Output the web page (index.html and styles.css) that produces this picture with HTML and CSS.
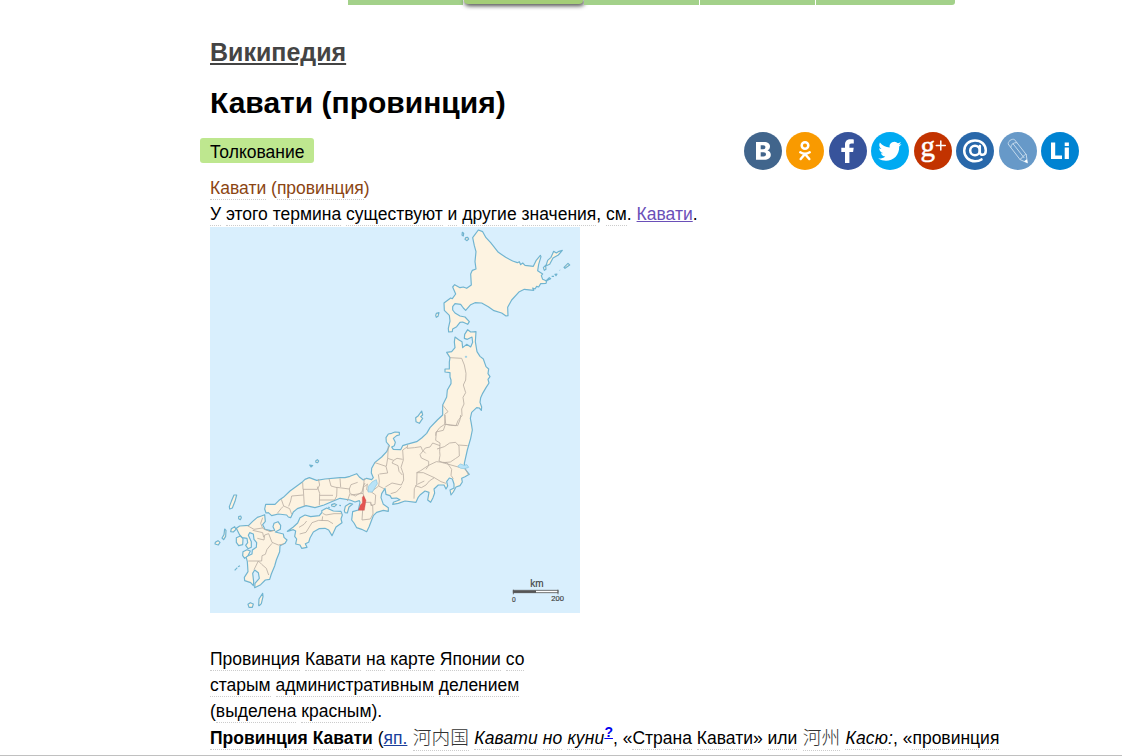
FILE: index.html
```html
<!DOCTYPE html>
<html lang="ru">

<head>
    <meta charset="UTF-8">
    <meta name="viewport" content="width=device-width, initial-scale=1.0">
    <title>Кавати (провинция)</title>
    <link rel="stylesheet" href="styles.css">
</head>

<body>
    <nav class="tabs">
        <a class="tab"></a>
        <a class="tab active"></a>
        <a class="tab"></a>
        <a class="tab"></a>
        <a class="tab last"></a>
    </nav>

    <main class="content">
        <h3 class="dict"><a href="#">Википедия</a></h3>
        <h1 class="title">Кавати (провинция)</h1>

        <div class="toolbar">
            <span class="label">Толкование</span>
            <div class="share">
                <svg class="vk" viewBox="0 0 38 38"><circle cx="19" cy="19" r="19"/><path class="glyph" fill-rule="evenodd" d="M12 10h8c4 0 6 2 6 4.500 0 2-1 3.300-2.500 4 2 .600 3.300 2 3.300 4.200 0 3.500-2.800 5-6.500 5H12zm4.700 3.300v3.900h2.500c1.500 0 2.200-.8 2.200-2s-.7-1.900-2.200-1.900zm0 6.900v4.200h2.800c1.700 0 2.500-.8 2.500-2.100s-.8-2.100-2.500-2.100z"/></svg>
                <svg class="ok" viewBox="0 0 38 38"><circle cx="19" cy="19" r="19"/><circle class="line" cx="19" cy="13.500" r="3.300"/><path class="line" d="M14.300 20.300c3 1.900 6.400 1.900 9.400 0M19 22l-4.300 5M19 22l4.300 5"/></svg>
                <svg class="fb" viewBox="0 0 38 38"><circle cx="19" cy="19" r="19"/><path class="glyph" d="M16 31V20h-3.700v-4.300H16v-3C16 9 18.200 7.200 21.500 7.200c1.500 0 2.900.1 3.300.2v4h-2.300c-1.800 0-2.100.9-2.100 2.100v2.200h4.300l-.6 4.300h-3.700v11z"/></svg>
                <svg class="tw" viewBox="0 0 38 38"><circle cx="19" cy="19" r="19"/><path class="glyph" d="M30.500 12c-.9.400-1.800.6-2.700.7 1-.6 1.700-1.500 2.100-2.600-.9.600-2 1-3 1.200a4.800 4.800 0 0 0-8.200 4.300c-4-.2-7.500-2.100-9.800-5-1.200 2.100-.7 4.900 1.500 6.300-.8 0-1.500-.2-2.200-.6 0 2.300 1.600 4.300 3.800 4.800-.7.200-1.400.2-2.100.1.600 1.900 2.300 3.200 4.400 3.300-2 1.600-4.500 2.300-7.100 2 10 6 21.500-.6 21-12.100 1-.700 1.700-1.500 2.300-2.400z"/></svg>
                <svg class="gp" viewBox="0 0 38 38"><circle cx="19" cy="19" r="19"/><text class="glyph" x="6.500" y="23.500">g</text><path class="line" d="M26.800 9v9M22.300 13.500h9"/></svg>
                <svg class="ml" viewBox="0 0 38 38"><circle cx="19" cy="19" r="19"/><circle class="line" cx="19" cy="18.500" r="4.800"/><path class="line" d="M23.800 14v6c0 4 6 4 6-1.500 0-6-4.600-10-10.800-10s-10.800 4.400-10.800 10.300S13 29.300 19 29.300c2.400 0 4.700-.6 6.500-1.900"/></svg>
                <svg class="lj" viewBox="0 0 38 38"><circle cx="19" cy="19" r="19"/><path class="line" d="M9.500 12.500L21 27.500l7.500 3.500-1.300-8.500L15.600 7.700c-2.300-1.800-8.200 2.300-6.100 4.800zM11.700 15.300c.5-3.300 2.900-4.800 6-4.700M14 11.700l11 14M21 27.500c.3-1.500 1.500-1.200 2-1.300.3-1.700 1-2 2-2 .3-1.500 1-1.900 2.200-1.700"/><path class="glyph" d="M25 29.300l3.500 1.700-.6-3.800z"/></svg>
                <svg class="li" viewBox="0 0 38 38"><circle cx="19" cy="19" r="19"/><path class="glyph" d="M10 10.500h4.200v13H21V27H10zM23.700 15.500h4.200V27h-4.200zM23.700 10.500h4.200V14h-4.200z"/></svg>
            </div>
        </div>

        <article class="article">
            <p class="name"><span>Кавати</span> (<span>провинция</span>)</p>
            <p><span>У</span> <span>этого</span> <span>термина</span> <span>существуют</span> <span>и</span> <span>другие</span> <span>значения</span>, <span>см</span>. <a class="visited" href="#">Кавати</a>.</p>

            <svg class="map" viewBox="0 0 1110 1158">
                <!-- Хоккайдо -->
                <g class="land" transform="translate(630 -6)">
                    <path d="M175 15L188 20 198 38 212 53 235 82 257 97 278 108 292 113 298 110 302 119 308 114 315 121 340 124 348 107 361 91 363 95 356 118 353 137 368 147 364 152 368 163 380 168 378 175 362 176 356 186 350 184 345 192 338 189 341 196 313 193 298 200 275 225 263 247 264 272 258 273 245 264 222 257 205 245 185 234 165 233 152 239 137 256 130 249 122 238 105 236 98 245 98 255 105 264 120 273 135 276 148 290 143 298 128 291 120 292 110 305 98 312 97 320 86 321 85 310 90 288 88 271 73 256 72 234 92 219 97 221 107 207 98 186 104 179 120 188 130 186 140 190 154 180 152 147 157 136 168 132 165 110 168 80 163 62 158 38z"/>
                    <path d="M127 22l4 3-1 8-4-3zM137 38l6-1 3 5-5 5-6-4zM49 265l8-2-3 11-5 3-2-6zM370 128l3 8 5-3-1-10 12-5 10-19 16-9 12-14-10 3-8 5-8-5-8 18-10 9-4 13zM432 127l12-12 5 5-14 10zM378 168l10-10 4 3zM395 154l7 0M405 148l6-1-3 5zM419 135l1 1"/>
                </g>
                <!-- Хонсю -->
                <path class="land" d="M735 330L746 338 756 344 758 362 770 352 782 360 788 346 786 330 772 337 763 334 764 322 773 308 782 315 798 314 796 344 801 374 810 388 820 396 828 419 836 426 834 440 840 449 834 457 837 468 828 482 818 499 812 512 810 526 815 540 814 550 808 543 800 542 785 556 781 574 784 590 787 609 782 634 772 669 763 709 765 726 778 742 765 749 755 754 757 765 750 776 738 780 730 795 723 804 720 789 732 783 732 771 727 756 718 753 710 764 713 777 708 786 702 774 685 774 672 786 674 798 669 812 662 826 653 819 657 796 645 792 630 804 624 812 618 826 585 822 565 829 548 832 550 826 570 818 560 813 545 814 540 806 528 802 525 784 515 800 513 812 520 832 535 842 535 853 520 850 500 856 490 866 485 879 477 900 470 914 455 907 440 902 432 888 425 879 428 854 445 849 450 826 448 821 435 825 420 819 390 814 370 822 342 834 315 842 288 836 262 845 250 855 242 872 235 870 230 864 205 861 185 866 175 857 168 858 164 846 167 832 195 832 207 820 220 811 240 792 278 764 285 757 298 752 320 760 345 756 390 752 405 752 420 748 440 740 448 750 460 759 470 754 485 758 490 752 484 738 485 724 495 706 515 690 530 674 538 656 529 645 528 632 535 621 545 619 555 615 568 616 568 624 560 626 550 634 556 646 553 656 545 660 550 667 572 668 578 656 590 652 620 644 635 633 650 619 660 602 682 579 698 564 698 534 710 510 712 489 723 470 723 459 720 450 720 437 705 435 705 426 718 426 718 405 720 392 710 376 725 374 735 362 733 345z"/>
                <!-- Сикоку -->
                <g class="land" transform="translate(120 714)">
                    <path d="M112 199L130 186 143 174 150 158 165 150 182 155 208 152 216 142 215 137 230 129 250 138 273 139 277 150 273 162 276 173 258 186 246 212 236 195 225 190 207 191 190 201 180 219 176 232 166 236 171 247 155 250 150 240 137 237 140 222 134 214 137 198 130 194z"/>
                    <path d="M283 137l3-13 14-9 8 2-11 9-5 18-7-1zM245 119l9-3 6 3-7 6-8-2zM179 0l4 6 5-4zM197 -12l5-4 4 4-3 5-5-1zM268 121l5 1M235 126l4 3"/>
                </g>
                <!-- Кюсю -->
                <g class="land" transform="translate(-6 789)">
                    <path d="M170 74L172 94 164 104 171 118 188 122 200 121 195 110 198 100 210 95 218 106 217 118 202 126 226 132 228 142 237 150 231 160 216 167 215 185 205 210 200 228 190 252 185 268 172 270 158 284 140 293 141 280 154 265 151 248 140 240 134 250 137 275 136 287 128 278 110 272 109 262 120 245 118 215 114 200 132 192 133 180 145 172 146 158 138 148 136 132 125 128 121 136 130 155 130 172 120 176 113 166 119 158 117 145 103 143 95 135 85 115 95 108 122 106 134 94 148 82 160 78z"/>
                    <path d="M85 143l12-5 8 8-1 18-12 3-7-10zM105 185l12-6 10 4-7 14-10 8-6-8zM70 116l10-6 4 8-8 8-8-1zM92 80l6-2 2 5-3 6-5-3zM64 50l6-16 8-19 8 0-5 19-8 20-8 3zM48 134l2-17 4 4-1 18-6 10-5-5zM22 157l8-5 6 5-5 8-10-3zM120 343l7-5 9 4-3 10-10 0zM152 347l1-20 11-17 1 10-5 21-5 5zM80 241l8-8M90 230l6-3"/>
                </g>
                <!-- Садо -->
                <path class="land" d="M635 552L638 564 632 569 638 574 628 589 618 584 617 572 625 566z"/>

                <!-- границы провинций -->
                <g class="border">
                    <g transform="translate(570 294)">
                        <path d="M150 98l35 2 8 20 5 25-1 20-7 15 7 23-8 14 3 20-7 15 1 20-12 15-6 15-16-1-13-3M128 240l16 20-10 8 3 28-7 20-22 5-1 11"/>
                    </g>
                    <g transform="translate(420 564)">
                        <path d="M285 0l-1 28 39 4 7-18 2-14M284 28l-15 10-10 13-2 25 13 8-1 25 1 12-3 17 11 5 23-2 15-10 12-8-1-30-10-11-18 2-16 11-22 7M325 90l28 2M270 92l-22-8-8 12-14 3-16 20 4 10 22 10 0 12-8 12M234 152l-22 15-12 6M234 152l25-12 32 3 14 20-2 18 7 10M278 143l50 14M343 155l12 24M173 90l-2 10 22-2 20-3 4 10 10 10M173 95l-15 10 2 30-7 22 7 20 1 18-7 15-28-6-20 12M158 133l-17-3-10 6-18-6M115 92l-2 38-4 24M131 136l-5 8 18 8 3 17 10 11M75 143l33 11 5 20-25 3M85 178l3 20-2 15-23 18-13-7 2-17M43 190l-2 20-2 25-37 5M53 207l-10 8M39 235l4 15 0 12 20 0 0 10 12-4 2-28-13-9M38 285l-2 30 25-3 8-15-1-26-8-6M86 213l16 8M154 215l-15 16-17 5M201 173l-1 36-7 12-1 30M223 198l-21 10M200 173l20 0 33 15-15 10-10 12-14 8-18-6M253 188l20 12 15 5"/>
                    </g>
                    <g transform="translate(120 714)">
                        <path d="M94 103l7 20 18 8 6 17M125 93l35-3M125 93l-3 15-6 16M82 145l12-15 6-6M158 52l1 21 43 0 7-13-4-18M160 73l3 50M202 65l7 20-1 35M209 91l40 0M208 105l46 0 6-12 1-25-18-5-6-22M260 67l38 5M270 40l2 26M298 72l2 14-8 22M298 72l5-13 20-7M301 86l15 7 20-12 4-17 5-10M149 207l19-5 18-29 20-7 28 1 15 9M147 187l15-9 8-10M218 145l10 5 24-4 22 0M218 154l-2 14"/>
                    </g>
                    <g transform="translate(-6 789)">
                        <path d="M118 107l20 11 25-4M164 83l-6 17 6 15 22 10 12-4M134 121l30 7 3 14M170 135l12-4 10 26 19 8 16-3M170 135l-2 15-20-5M192 160l-15 18-5 15-10 4-1 16-40 0M151 213l10 10 14 12 7 20M151 213l-13 26"/>
                    </g>
                </g>
                <path class="water" d="M475 778l12-14 12-6 3 12-15 25-13 0zM743 718l8-7 12 4 8-2 5 8-12 4-12-1zM766 388l4 0 0 3-4 0z"/>
                <path class="target" d="M457 811l4-5 7 14-5 30-18 0 6-16 6-6z"/>

                <g class="scale">
                    <path d="M910 1094h68"/>
                    <path class="light" d="M978 1094h66"/>
                    <path class="frame" d="M910 1088v14M1044 1088v14M910 1090h134v7H910z"/>
                    <text x="961" y="1081" class="unit">km</text>
                    <text x="906" y="1124">0</text>
                    <text x="1024" y="1123" textLength="38" lengthAdjust="spacingAndGlyphs">200</text>
                </g>
            </svg>

            <div class="caption"><span>Провинция</span> <span>Кавати</span> <span>на</span> <span>карте</span> <span>Японии</span> <span>со</span> <span>старым</span> <span>административным</span> <span>делением</span> (<span>выделена</span> <span>красным</span>).</div>
            <p class="intro"><b><span>Провинция</span> <span>Кавати</span></b> (<a class="lang" href="#">яп.</a> <span class="jp" lang="ja">河内国</span> <i><span>Кавати</span> <span>но</span> <span>куни</span></i><sup><a href="#">?</a></sup>, «<span>Страна</span> <span>Кавати</span>» <span>или</span> <span class="jp" lang="ja">河州</span> <i><span>Касю</span>:</i>, «<span>провинция</span></p>
        </article>
    </main>

    <div class="bottom-line"></div>
</body>

</html>
```
FILE: styles.css
```css
* {
    box-sizing: border-box;
}

body {
    display: flex;
    flex-direction: column;
    height: 756px;
    margin: 0;
    overflow: hidden;
    background: #fff;
    color: #000;
    font-family: "Liberation Sans", Arial, "Noto Sans CJK JP", sans-serif;
    font-size: 17.500px;
    line-height: 26px;
}

p,
h1,
h3 {
    margin: 0;
}

.tabs {
    display: flex;
    flex: none;
    gap: 1px;
    height: 5px;
    padding-left: 348px;
}

.tab {
    width: 115px;
    background: #a3d18a;
}

.tab.active {
    width: 119px;
    height: 4px;
    background: #a4cd77;
    border-radius: 0 0 4px 4px;
    box-shadow: 1px 1px 4px 1px rgba(0, 0, 0, 0.7);
}

.tab.last {
    width: 139px;
    border-radius: 0 0 3px 0;
}

.content {
    flex: 1;
    min-height: 0;
    padding-left: 210px;
}

.dict {
    margin-top: 32px;
    font-size: 25px;
    line-height: 30px;
}

.dict a {
    color: #444;
}

.title {
    margin-top: 18px;
    font-size: 30px;
    line-height: 36px;
    white-space: nowrap;
}

.toolbar {
    display: flex;
    align-items: flex-start;
    justify-content: space-between;
    height: 43px;
    margin-top: 11px;
    margin-left: -10px;
    padding-right: 43px;
}

.label {
    height: 25px;
    margin-top: 6px;
    padding: 1px 10px 0;
    background: #bee78f;
    border-radius: 3px;
}

.share {
    display: flex;
    gap: 4.500px;
}

.share svg {
    width: 38px;
    height: 38px;
}

.glyph {
    fill: #fff;
}

.share .line {
    fill: none;
    stroke: #fff;
    stroke-width: 2.500;
    stroke-linecap: round;
}

.vk { fill: #41658c; }
.ok { fill: #f99a00; }
.fb { fill: #37539b; }
.tw { fill: #00aaf2; }
.gp { fill: #c23300; }
.ml { fill: #2968aa; }
.lj { fill: #6799c8; }
.li { fill: #0083d2; }

.gp text {
    font-family: "Liberation Serif", serif;
    font-size: 29px;
    stroke: #fff;
    stroke-width: 0.500;
}

.share .gp .line {
    stroke-width: 1.500;
}

.share .lj .line {
    stroke: #c3d9ec;
    stroke-width: 1;
}

/* пунктир под каждым словом */
.article span {
    padding-bottom: 1px;
    border-bottom: 1px dotted #ccc;
}

.article {
    white-space: nowrap;
}

.name {
    color: #8b4513;
}

.visited {
    color: #6a4fb8;
}

.map {
    display: block;
    width: 370px;
    height: 386px;
    background: #d9effd;
}

.land {
    fill: #fdf3e1;
    stroke: #70b4d0;
    stroke-width: 3.500;
    stroke-linejoin: round;
}

.border {
    fill: none;
    stroke: #b9aea4;
    stroke-width: 2.500;
    stroke-linejoin: round;
}

.water {
    fill: #b9e3f7;
    stroke: #82c4e3;
    stroke-width: 2;
}

.target {
    fill: #e45450;
    stroke: #bd5350;
}

.scale {
    fill: #444;
    stroke: #555;
    stroke-width: 7;
    font-size: 20px;
}

.scale .light {
    stroke: #fff;
}

.scale .frame {
    fill: none;
    stroke-width: 2.500;
}

.scale text {
    stroke: #444;
    stroke-width: 0.500;
}

.scale .unit {
    font-size: 30px;
}

.caption {
    width: 350px;
    margin-top: 33px;
    white-space: normal;
}

.intro {
    line-height: 28px;
}

.intro i {
    letter-spacing: 0.130px;
}

.lang {
    color: #1a3f9c;
}

.jp {
    margin: 0 0.500px;
    color: #333;
    font-family: "Noto Sans CJK JP", sans-serif;
    font-size: 18.700px;
    font-weight: 300;
    line-height: 1;
}

sup {
    font-size: 14px;
    font-weight: bold;
    line-height: 0;
}

.bottom-line {
    flex: none;
    height: 1px;
    background: #c0c0c0;
}
```
